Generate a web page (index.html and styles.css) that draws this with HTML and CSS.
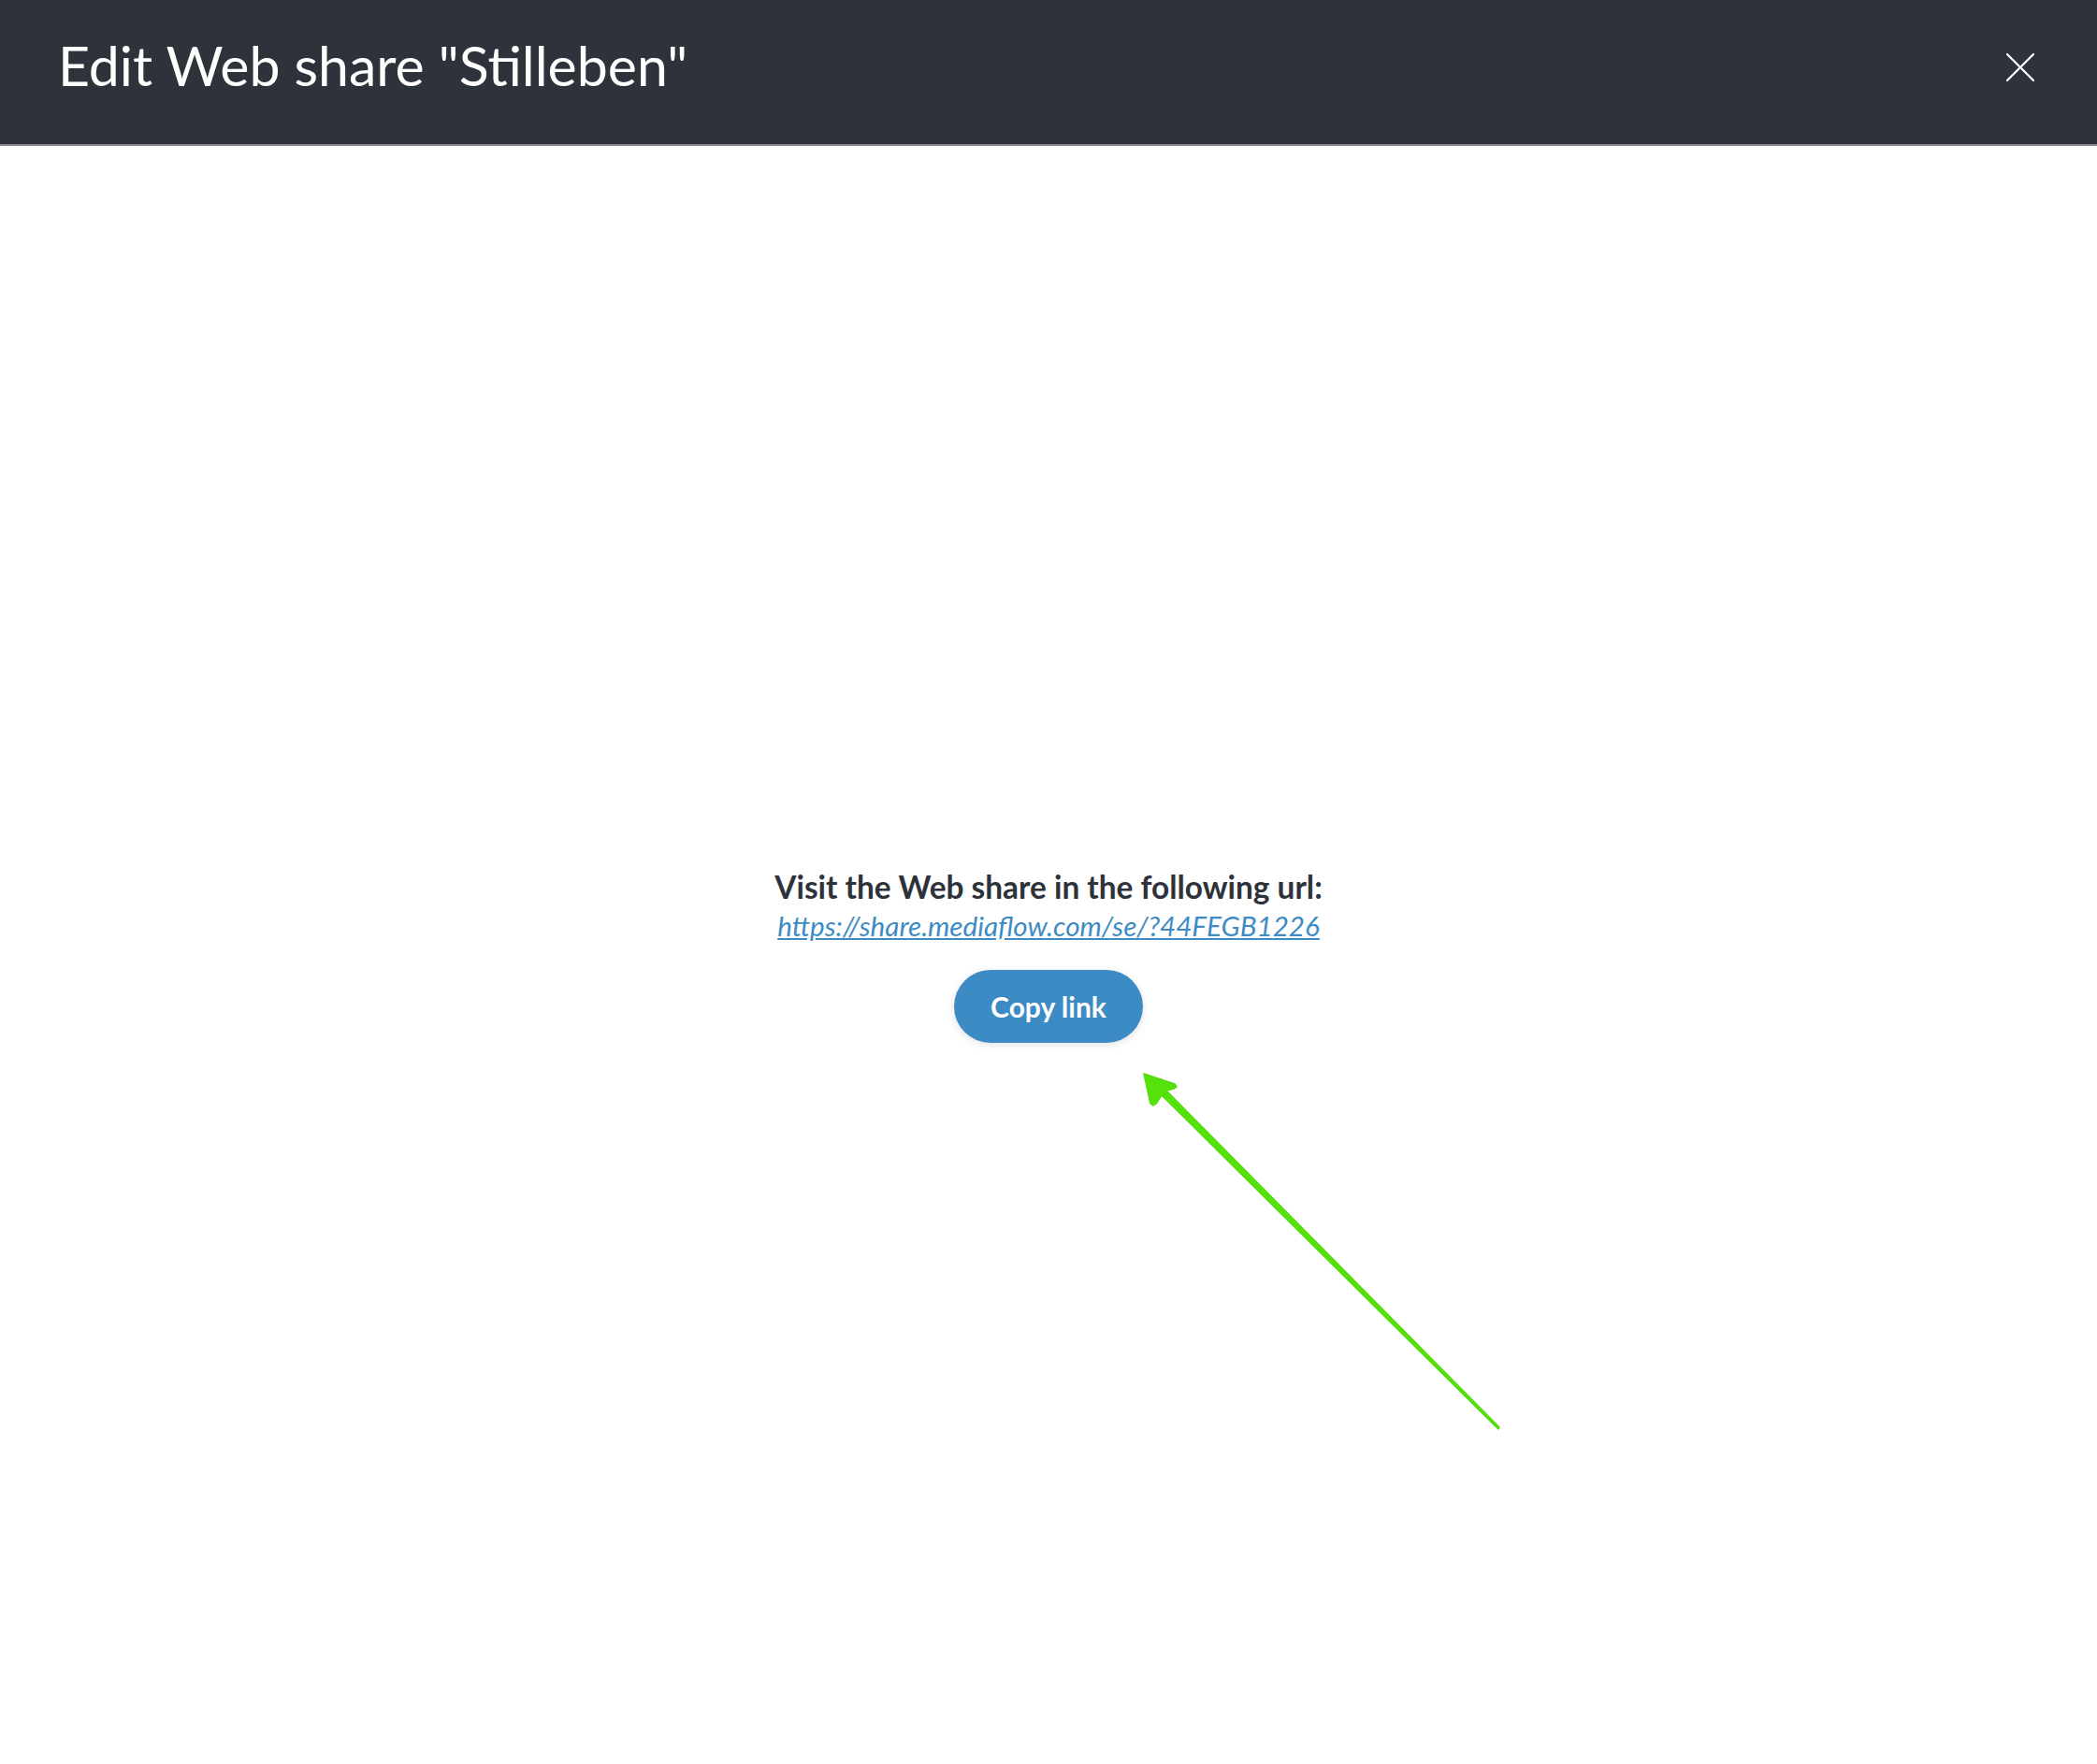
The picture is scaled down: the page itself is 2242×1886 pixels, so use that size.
FILE: index.html
```html
<!DOCTYPE html>
<html lang="en">
<head>
  <meta charset="UTF-8" />
  <meta name="viewport" content="width=device-width, initial-scale=1.0" />
  <title>Edit Web share</title>
  <link rel="stylesheet" href="styles.css">
</head>
<body>
  <div class="modal">
    <header class="modal-header">
      <h1>Edit Web share "Stilleben"</h1>
      <button class="close" aria-label="Close">
        <svg width="30" height="30" viewBox="0 0 30 30">
          <path d="M1 1 L29 29 M29 1 L1 29" stroke="#ffffff" stroke-width="2.2" stroke-linecap="round" />
        </svg>
      </button>
    </header>

    <main class="modal-body">
      <div class="share">
        <p class="share-title">Visit the Web share in the following url:</p>
        <a class="share-url" href="#">https://share.mediaflow.com/se/?44FEGB1226</a>
        <button class="copy">Copy link</button>
      </div>

      <svg class="arrow" width="440" height="440" viewBox="0 0 440 440">
        <polygon points="23,28 56,39 58,42 55,44 47,46 403,406 402,408 42,51 36,60 33,62 30,60"
                 fill="#55e20c" stroke="#52dc0a" stroke-width="1.5" stroke-linejoin="round" />
      </svg>
    </main>
  </div>
</body>
</html>
```

FILE: styles.css
```css
* {
  box-sizing: border-box;
  margin: 0;
  padding: 0;
}

body {
  font-family: Lato, 'Open Sans', sans-serif;
  background-color: #ffffff;
  color: #2e323a;
}

.modal {
  min-height: 100vh;
  display: flex;
  flex-direction: column;
}

.modal-header {
  height: 156px;
  background-color: #2e323a;
  border-bottom: 2px solid #85878b;
  display: flex;
  align-items: center;
  justify-content: space-between;
  padding: 0 67px 10px 62px;
}

.modal-header h1 {
  font-weight: 400;
  font-size: 59px;
  line-height: 1;
  color: #ffffff;
  margin-bottom: 6px;
}

.close {
  background: none;
  border: none;
  width: 30px;
  height: 30px;
  cursor: pointer;
}

.modal-body {
  flex: 1;
  position: relative;
  display: flex;
  align-items: center;
  justify-content: center;
}

.share {
  display: flex;
  flex-direction: column;
  align-items: center;
}

.share-title {
  font-weight: 700;
  font-size: 33.4px;
  line-height: 42px;
}

.share-url {
  font-style: italic;
  font-size: 29.6px;
  line-height: 42px;
  color: #3d8bc4;
}

.copy {
  margin-top: 26px;
  width: 202px;
  height: 78px;
  border: none;
  border-radius: 39px;
  background-color: #3d8bc4;
  color: #ffffff;
  font-family: Lato, sans-serif;
  font-weight: 700;
  font-size: 30px;
  box-shadow: 0 2px 8px rgba(0, 0, 0, 0.12);
  cursor: pointer;
}

.arrow {
  position: absolute;
  left: 1200px;
  top: 964px;
}
```
